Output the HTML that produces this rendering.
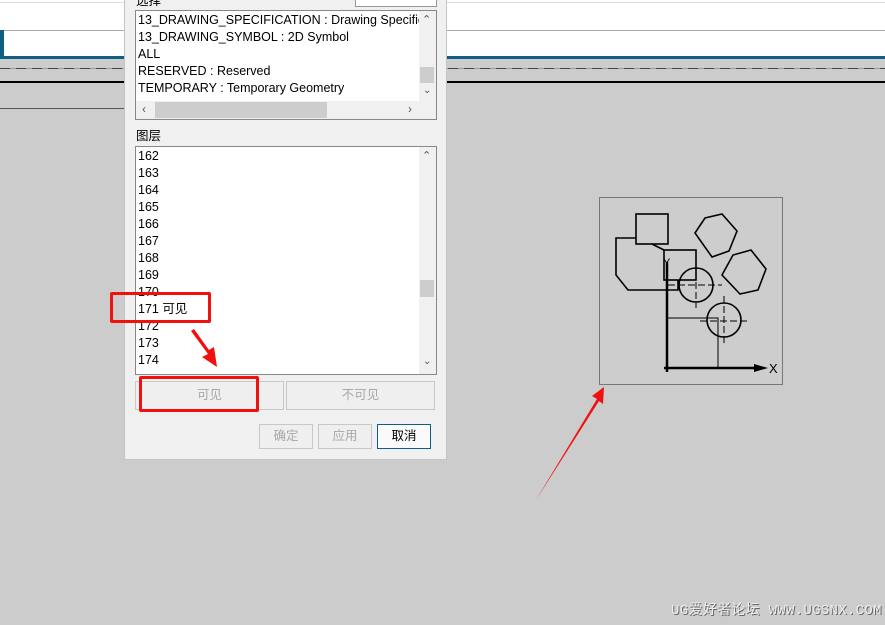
<!DOCTYPE html>
<html><head><meta charset="utf-8"><style>
*{margin:0;padding:0;box-sizing:border-box}
body{width:885px;height:625px;overflow:hidden;background:#cccccc;position:relative;font-family:"Liberation Sans","Noto Sans CJK SC",sans-serif;font-size:12.5px;color:#000}
.a{position:absolute}
.it{position:absolute;left:2px;height:17px;line-height:17px;white-space:nowrap}
.btn{position:absolute;border:1px solid #c8c8c8;background:#efefef;color:#a8a8a8;text-align:center;font-size:12.5px}
</style></head><body>
<div class="a" style="left:0;top:0;width:885px;height:57px;background:#fff"></div>
<div class="a" style="left:0;top:2px;width:885px;height:1px;background:#ddd"></div>
<div class="a" style="left:0;top:30px;width:885px;height:1px;background:#aaa"></div>
<div class="a" style="left:0;top:30px;width:4px;height:27px;background:#0e5f80"></div>
<div class="a" style="left:0;top:56px;width:885px;height:3px;background:#0e5f80"></div>
<div class="a" style="left:0;top:68px;width:885px;height:1px;background:repeating-linear-gradient(90deg,#444 0 10px,#999 10px 16px)"></div>
<div class="a" style="left:0;top:81px;width:885px;height:2px;background:#000"></div>
<div class="a" style="left:0;top:108px;width:125px;height:1px;background:#555"></div>

<!-- dialog -->
<div class="a" style="left:124px;top:0;width:323px;height:460px;background:#f0f0f0;border:1px solid #c4c4c4;border-top:none"></div>
<div class="a" style="left:136px;top:-10px;font-size:12.5px">选择</div>
<div class="a" style="left:355px;top:0;width:82px;height:7px;background:#fff;border:1px solid #999;border-top:none"></div>
<div class="a" style="left:135px;top:10px;width:302px;height:110px;background:#fff;border:1px solid #888;overflow:hidden">
 <div class="it" style="top:1px">13_DRAWING_SPECIFICATION : Drawing Specification</div>
 <div class="it" style="top:18px">13_DRAWING_SYMBOL : 2D Symbol</div>
 <div class="it" style="top:35px">ALL</div>
 <div class="it" style="top:52px">RESERVED : Reserved</div>
 <div class="it" style="top:69px">TEMPORARY : Temporary Geometry</div>
 <div class="a" style="left:283px;top:0;width:17px;height:90px;background:#f0f0f0"></div>
 <div class="a" style="left:284px;top:56px;width:14px;height:16px;background:#cdcdcd"></div>
 <div class="a" style="left:286px;top:2px;color:#555;font-size:11px">&#8963;</div>
 <div class="a" style="left:287px;top:74px;color:#555;font-size:10px">&#8964;</div>
 <div class="a" style="left:0;top:90px;width:300px;height:18px;background:#f0f0f0"></div>
 <div class="a" style="left:19px;top:91px;width:172px;height:16px;background:#cdcdcd"></div>
 <div class="a" style="left:6px;top:91px;color:#555;font-size:12px">&#8249;</div>
 <div class="a" style="left:272px;top:91px;color:#555;font-size:12px">&#8250;</div>
</div>
<div class="a" style="left:136px;top:125px;font-size:12.5px">图层</div>
<div class="a" style="left:135px;top:146px;width:302px;height:229px;background:#fff;border:1px solid #888;overflow:hidden">
 <div class="it" style="top:1px">162</div><div class="it" style="top:18px">163</div><div class="it" style="top:35px">164</div>
 <div class="it" style="top:52px">165</div><div class="it" style="top:69px">166</div><div class="it" style="top:86px">167</div>
 <div class="it" style="top:103px">168</div><div class="it" style="top:120px">169</div><div class="it" style="top:137px">170</div>
 <div class="it" style="top:154px">171 可见</div><div class="it" style="top:171px">172</div><div class="it" style="top:188px">173</div>
 <div class="it" style="top:205px">174</div>
 <div class="a" style="left:283px;top:0;width:17px;height:227px;background:#f0f0f0"></div>
 <div class="a" style="left:284px;top:133px;width:14px;height:17px;background:#cdcdcd"></div>
 <div class="a" style="left:286px;top:2px;color:#555;font-size:11px">&#8963;</div>
 <div class="a" style="left:287px;top:209px;color:#555;font-size:10px">&#8964;</div>
</div>
<div class="btn" style="left:135px;top:381px;width:149px;height:29px;line-height:27px">可见</div>
<div class="btn" style="left:286px;top:381px;width:149px;height:29px;line-height:27px">不可见</div>
<div class="btn" style="left:259px;top:424px;width:54px;height:25px;line-height:23px">确定</div>
<div class="btn" style="left:318px;top:424px;width:54px;height:25px;line-height:23px">应用</div>
<div class="btn" style="left:377px;top:424px;width:54px;height:25px;line-height:23px;border:1px solid #0e5f80;background:#fafafa;color:#000">取消</div>

<!-- red highlights -->
<div class="a" style="left:110px;top:292px;width:101px;height:31px;border:3px solid #f01010;border-radius:2px"></div>
<div class="a" style="left:139px;top:376px;width:120px;height:36px;border:3px solid #f01010;border-radius:2px"></div>

<!-- drawing -->
<svg class="a" style="left:0;top:0" width="885" height="625">
 <polygon points="191,331 208,354 202,357 217,367 214,347 209,350 194,329" fill="#f01010"/>
 <polygon points="536,500 597,399 592,396 604,387 603,404 599,401" fill="#f01010"/>
 <rect x="599.5" y="197.5" width="183" height="187" fill="#cdcdcd" stroke="#777"/>
 <g fill="none" stroke="#000" stroke-width="1.6">
  <rect x="636" y="214" width="32" height="30"/>
  <polyline points="636,238 616,238 616,275 628,290 678,290 678,280"/>
  <line x1="652" y1="244" x2="664" y2="250"/>
  <rect x="664" y="250" width="32" height="30"/>
  <circle cx="696" cy="285" r="17"/>
  <circle cx="724" cy="320" r="17"/>
  <polygon points="695,233 705,218 722,214 737,231 729,251 712,257"/>
  <polygon points="722,275 733,255 751,250 766,269 758,290 740,294"/>
 </g>
 <g fill="none" stroke="#000" stroke-width="1" stroke-dasharray="7,3">
  <line x1="668" y1="285" x2="722" y2="285"/><line x1="696" y1="262" x2="696" y2="308"/>
  <line x1="700" y1="321" x2="748" y2="321"/><line x1="724" y1="296" x2="724" y2="344"/>
 </g>
 <g stroke="#000" fill="none">
  <polyline points="667,318 718,318 718,368" stroke-width="1"/>
  <line x1="667" y1="262" x2="667" y2="372" stroke-width="2.5"/>
  <line x1="664" y1="368" x2="756" y2="368" stroke-width="2.5"/>
 </g>
 <polygon points="754,364 768,368 754,372" fill="#000"/>
 <text x="769" y="373" font-family="Liberation Sans" font-size="13" fill="#000">X</text>
 <text x="663" y="266" font-family="Liberation Sans" font-size="11" fill="#000">Y</text>
</svg>
<div class="a" style="left:671px;top:599px;font-family:'Liberation Mono','Noto Sans CJK SC',monospace;font-size:14px;letter-spacing:0.3px;color:#eee;text-shadow:1px 1px 0 #666;white-space:nowrap">UG爱好者论坛 WWW.UGSNX.COM</div>
</body></html>
